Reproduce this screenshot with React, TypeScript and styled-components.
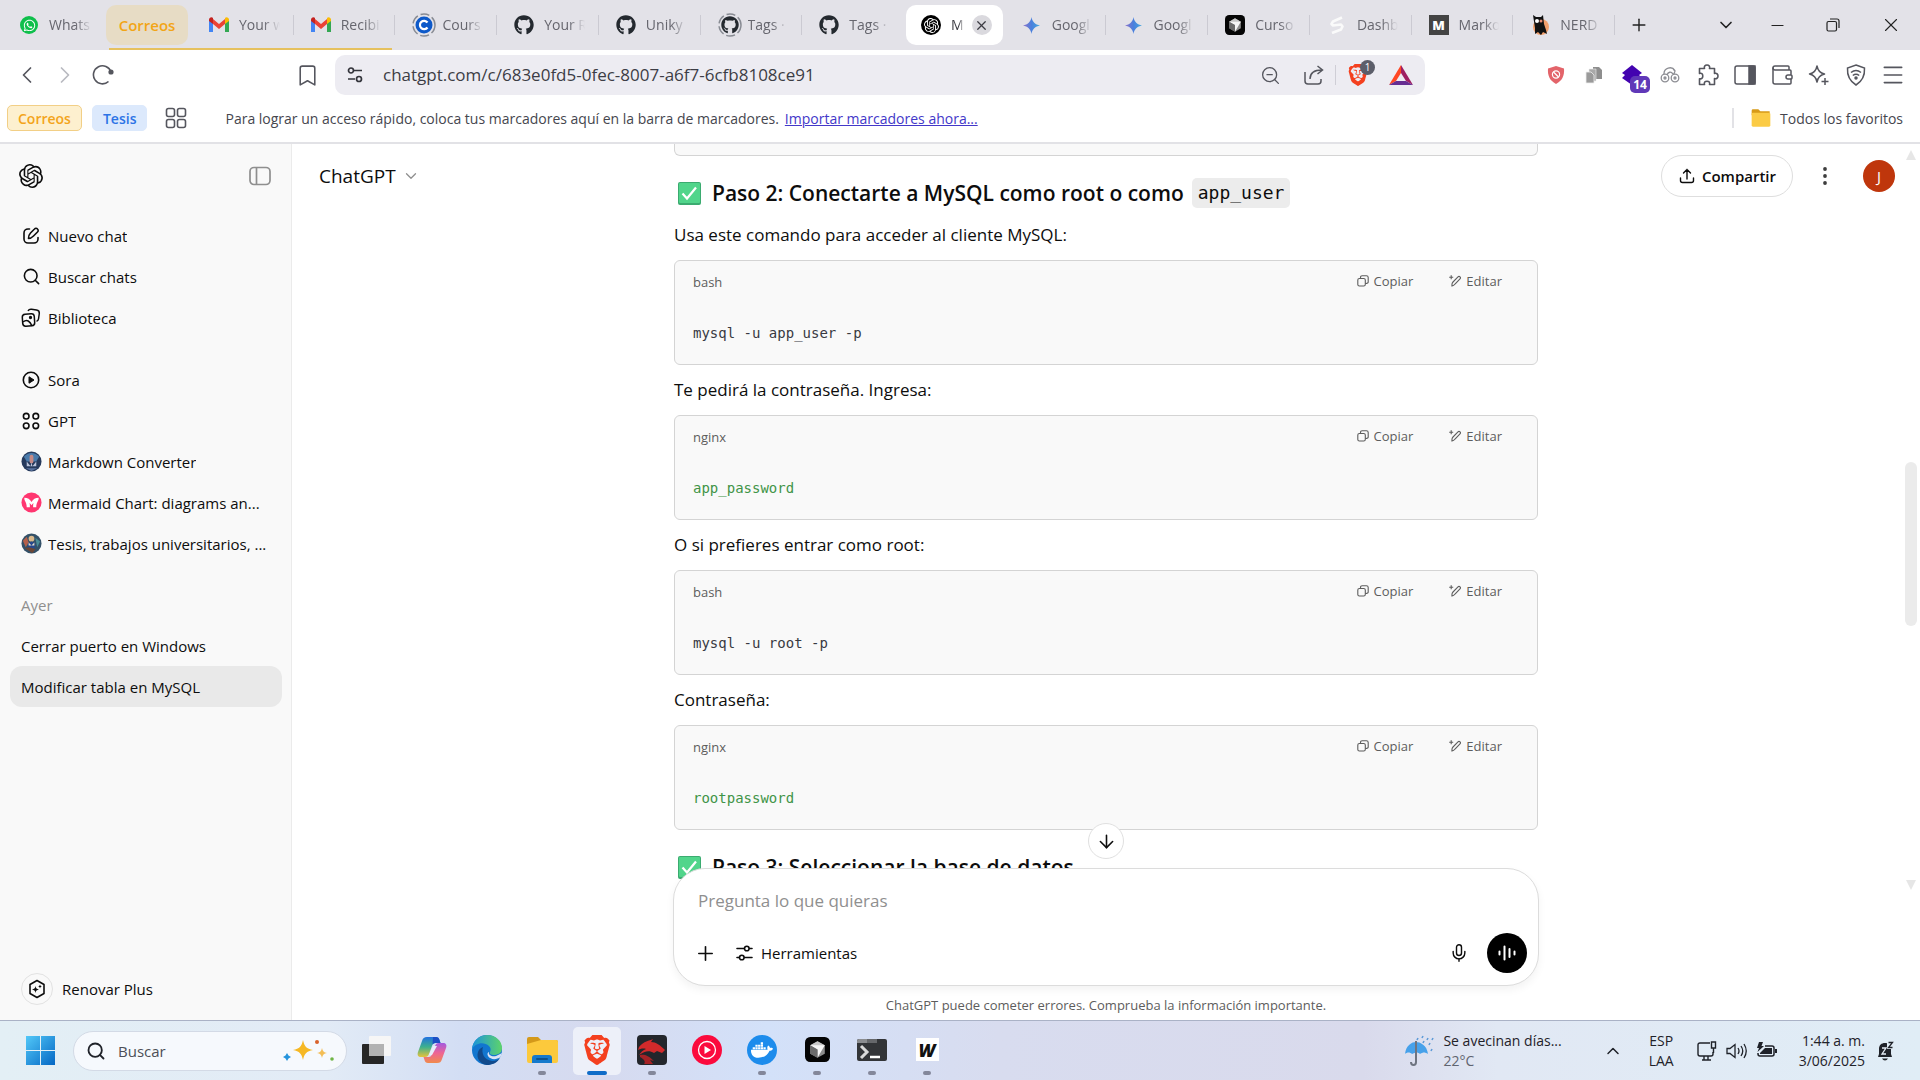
import React from "react";
import styled, { createGlobalStyle, css } from "styled-components";
import {
  ArrowDown,
  Bookmark,
  ChevronDown,
  ChevronLeft,
  ChevronRight,
  ChevronUp,
  Menu,
  Mic,
  Minus,
  Plus,
  Search,
  Wallet,
  X,
  ZoomOut,
} from "lucide-react";
import { FaGithub, FaWhatsapp, FaDocker } from "react-icons/fa";
import { SiOpenai, SiBrave } from "react-icons/si";

const ui = `"Open Sans", "Noto Sans", sans-serif`;
const mono = `"DejaVu Sans Mono", "Liberation Mono", monospace`;

const GlobalStyle = createGlobalStyle`
  *, *::before, *::after { box-sizing: border-box; }
  body { margin: 0; background: #fff; font-family: ${ui}; color: #0d0d0d; }
  button, input, textarea { font: inherit; color: inherit; border: 0; background: none; padding: 0; margin: 0; outline: 0; }
  button { cursor: pointer; }
  svg { display: block; flex: none; }
  h2, p, pre, ul { margin: 0; padding: 0; }
  ul { list-style: none; }
`;

const Screen = styled.div`
  display: flex;
  flex-direction: column;
  height: 100vh;
  overflow: hidden;
`;

/* ---------- tab strip ---------- */

const TabStrip = styled.div`
  display: flex;
  flex: none;
  height: 50px;
  background: #e3e2e8;
  color: #66666e;
  font-size: 14px;
`;

const tabBase = css`
  display: flex;
  align-items: center;
  min-width: 0;
  height: 50px;
  text-align: left;
`;

const PinnedTab = styled.button`
  ${tabBase}
  flex: none;
  width: 106px;
  gap: 10px;
  padding: 0 14px 0 19px;
`;

const Tab = styled.button<{ $divider?: boolean }>`
  ${tabBase}
  flex: 1 1 0;
  gap: 10px;
  padding: 0 14px 0 17px;
  background: ${(p) =>
    p.$divider ? "linear-gradient(#cbcad2, #cbcad2) right center / 1px 20px no-repeat" : "none"};
`;

const ActiveTab = styled.div`
  display: flex;
  flex: 1 1 0;
  align-items: center;
  justify-content: space-between;
  min-width: 0;
  height: 40px;
  margin: 5px 2px;
  padding: 0 11px 0 15px;
  border-radius: 10px;
  background: #fff;
  color: #3b3b42;
`;

const ActiveTitle = styled.button`
  display: flex;
  align-items: center;
  gap: 10px;
  min-width: 0;
  overflow: hidden;
`;

const TabText = styled.span`
  flex: 1;
  min-width: 0;
  overflow: hidden;
  white-space: nowrap;
  line-height: 20px;
  mask-image: linear-gradient(90deg, #000 60%, transparent 100%);
`;

const TabClose = styled.button`
  display: grid;
  place-items: center;
  flex: none;
  width: 20px;
  height: 20px;
  border-radius: 50%;
  background: #dad9de;
`;

const Favicon = styled.span`
  display: grid;
  place-items: center;
  flex: none;
  width: 20px;
  height: 24px;
  color: #24292f;
`;

const WhatsAppDisc = styled.span`
  display: grid;
  place-items: center;
  width: 18px;
  height: 18px;
  border-radius: 50%;
  background: #0fbf4b;
  color: #fff;
`;

const TabGroup = styled.div`
  position: relative;
  display: flex;
  flex: 2 1 148px;
  min-width: 0;
  &::after {
    content: "";
    position: absolute;
    left: 3px;
    right: 3px;
    bottom: 0;
    height: 2px;
    background: #e6c15e;
  }
`;

const GroupChip = styled.button`
  flex: none;
  width: 82px;
  height: 40px;
  margin: 5px 4px 5px 0;
  border-radius: 10px;
  background: #e7dcc5;
  color: #f2a516;
  font-size: 15px;
  font-weight: 600;
`;

const WindowControls = styled.div`
  display: flex;
  align-items: center;
  flex: none;
  color: #222;
`;

const WindowButton = styled.button<{ $w: number; $apart?: boolean }>`
  display: grid;
  place-items: center;
  width: ${(p) => p.$w}px;
  height: 50px;
  margin-left: ${(p) => (p.$apart ? "39px" : 0)};
`;

/* ---------- toolbar ---------- */

const Toolbar = styled.div`
  display: flex;
  align-items: center;
  flex: none;
  height: 50px;
  padding: 0 9px 0 8px;
  color: #55565e;
`;

const ToolButton = styled.button<{ $dim?: boolean }>`
  position: relative;
  display: grid;
  place-items: center;
  flex: none;
  width: 38px;
  height: 38px;
  color: ${(p) => (p.$dim ? "#b9bac0" : "inherit")};
`;

const AddressBar = styled.div`
  display: flex;
  align-items: center;
  flex: 0 1 1090px;
  min-width: 0;
  height: 40px;
  margin-left: 9px;
  padding: 0 3px 0 11px;
  border-radius: 10px;
  background: #edecf2;
  ${ToolButton} {
    width: 43px;
  }
`;

const Address = styled.input`
  flex: 1;
  min-width: 0;
  margin-left: 19px;
  font-size: 17px;
  line-height: 24px;
  color: #3c3d45;
`;

const NavGap = styled.span`
  width: 166px;
  flex: none;
`;

const BarDivider = styled.span<{ $h: number }>`
  flex: none;
  width: 1px;
  height: ${(p) => p.$h}px;
  background: #cfced6;
`;

const PinnedExtensions = styled.div`
  display: flex;
  margin-left: auto;
`;

const BrowserTools = styled.div`
  display: flex;
  ${ToolButton} {
    width: 37px;
  }
`;

const CountBadge = styled.span<{ $round?: boolean }>`
  position: absolute;
  right: ${(p) => (p.$round ? "4px" : "1px")};
  top: ${(p) => (p.$round ? "4px" : "20px")};
  min-width: ${(p) => (p.$round ? 15 : 20)}px;
  padding: 0 2px;
  border-radius: ${(p) => (p.$round ? 8 : 5)}px;
  background: ${(p) => (p.$round ? "#5c5e6a" : "#6038b8")};
  color: #fff;
  font-size: ${(p) => (p.$round ? 10 : 12)}px;
  font-weight: ${(p) => (p.$round ? 400 : 700)};
  line-height: ${(p) => (p.$round ? 15 : 17)}px;
  text-align: center;
`;

const BookmarksBar = styled.div`
  display: flex;
  align-items: center;
  flex: none;
  height: 44px;
  padding: 0 17px 6px 7px;
  border-bottom: 2px solid #e2e2e6;
  color: #45464e;
  font-size: 14px;
  white-space: nowrap;
`;

const SavedGroup = styled.button<{ $tone: "amber" | "blue" }>`
  height: 26px;
  margin-right: 10px;
  padding: 0 10px;
  border-radius: 5px;
  font-size: 14px;
  font-weight: 600;
  ${(p) =>
    p.$tone === "amber"
      ? "background:#fdf0cf;border:1px solid #f2cf86;color:#f3a41b;"
      : "background:#dce9fc;border:1px solid #dce9fc;color:#2d74e6;"}
`;

const BarHint = styled.p`
  margin-left: 38px;
`;

const BarLink = styled.a`
  margin-left: 6px;
  color: #4338c9;
`;

const GridButton = styled.button`
  margin-left: 8px;
`;

const AllBookmarks = styled.button`
  display: flex;
  align-items: center;
  gap: 9px;
  height: 20px;
  margin-left: auto;
  padding-left: 17px;
  border-left: 2px solid #e2e2e6;
`;

/* ---------- page ---------- */

const Page = styled.div`
  display: flex;
  flex: 1;
  min-height: 0;
`;

const Sidebar = styled.nav`
  display: flex;
  flex-direction: column;
  flex: none;
  width: 292px;
  padding: 0 9px 15px 10px;
  border-right: 1px solid #ebebeb;
  background: #f9f9f9;
`;

const SideHeader = styled.div`
  display: flex;
  align-items: center;
  justify-content: space-between;
  height: 63px;
  margin-bottom: 8px;
  padding: 0 11px 0 9px;
`;

const SideSection = styled.ul`
  margin-bottom: 21px;
`;

const SideLink = styled.a<{ $active?: boolean }>`
  display: flex;
  align-items: center;
  gap: 7px;
  height: 41px;
  padding: 0 11px;
  border-radius: 12px;
  background: ${(p) => (p.$active ? "#e9e9e9" : "none")};
  color: #0d0d0d;
  font-size: 15px;
  text-decoration: none;
`;

const SideHeading = styled.h2`
  padding: 0 11px;
  color: #8f8f8f;
  font-size: 15px;
  font-weight: 400;
  line-height: 40px;
`;

const SideIcon = styled.span`
  display: grid;
  place-items: center;
  flex: none;
  width: 20px;
`;

const Ellipsis = styled.span`
  min-width: 0;
  overflow: hidden;
  text-overflow: ellipsis;
  white-space: nowrap;
`;

const Upgrade = styled.button`
  display: flex;
  align-items: center;
  gap: 9px;
  margin-top: auto;
  padding-left: 11px;
  font-size: 15px;
`;

const UpgradeIcon = styled.span`
  display: grid;
  place-items: center;
  width: 32px;
  height: 32px;
  border: 1px solid #e2e2e2;
  border-radius: 50%;
`;

const Main = styled.main`
  position: relative;
  display: flex;
  flex-direction: column;
  flex: 1;
  min-width: 0;
`;

const ChatHeader = styled.header`
  position: absolute;
  z-index: 2;
  top: 0;
  left: 0;
  right: 0;
  display: flex;
  align-items: center;
  justify-content: space-between;
  height: 63px;
  padding: 0 25px 0 27px;
`;

const ModelButton = styled.button`
  display: flex;
  align-items: center;
  gap: 6px;
  font-size: 19px;
  line-height: 28px;
`;

const HeaderActions = styled.div`
  display: flex;
  align-items: center;
`;

const ShareButton = styled.button`
  display: flex;
  align-items: center;
  gap: 7px;
  height: 42px;
  padding: 0 16px 0 17px;
  border: 1px solid #dedede;
  border-radius: 21px;
  background: #fff;
  font-size: 15px;
  font-weight: 600;
`;

const MoreButton = styled.button`
  display: grid;
  place-items: center;
  width: 40px;
  height: 40px;
  margin: 0 18px 0 12px;
`;

const Avatar = styled.button`
  width: 32px;
  height: 32px;
  border-radius: 50%;
  background: #bf360c;
  color: #fff;
  font-size: 15px;
`;

const Thread = styled.div`
  display: flex;
  justify-content: center;
  flex: 1;
  min-height: 0;
  overflow: hidden;
`;

const Message = styled.article`
  width: 864px;
  max-width: 100%;
`;

const StepTitle = styled.h2`
  display: flex;
  align-items: center;
  height: 28px;
  margin: 23px 0 14px;
  padding-left: 4px;
  font-size: 21px;
  font-weight: 600;
  white-space: pre;
`;

const StepText = styled.span`
  margin: 0 8px 0 11px;
`;

const InlineCode = styled.code`
  padding: 0 6px;
  border-radius: 5px;
  background: #ececec;
  font-family: ${mono};
  font-size: 18px;
  font-weight: 400;
  line-height: 30px;
`;

const Paragraph = styled.p`
  font-size: 17px;
  line-height: 28px;
`;

const CodeBox = styled.section`
  height: 105px;
  margin: 11px 0;
  padding: 8px 18px;
  border: 1px solid #d4d4d4;
  border-radius: 6px;
  background: #f9f9f9;
`;

const CodeBoxEnd = styled.div`
  height: 12px;
  border: 1px solid #d4d4d4;
  border-top: 0;
  border-radius: 0 0 6px 6px;
  background: #f9f9f9;
`;

const CodeHead = styled.div`
  display: flex;
  align-items: center;
  height: 26px;
  padding-right: 17px;
  color: #5d5d5d;
  font-size: 13px;
`;

const CodeActions = styled.div`
  display: flex;
  align-items: center;
  gap: 36px;
  height: 24px;
  margin-bottom: auto;
  margin-left: auto;
`;

const CodeAction = styled.button`
  display: flex;
  align-items: center;
  gap: 5px;
`;

const CodeText = styled.pre<{ $green?: boolean }>`
  margin-top: 28px;
  color: ${(p) => (p.$green ? "#3f9447" : "#383a42")};
  font-family: ${mono};
  font-size: 14px;
  line-height: 20px;
  code {
    font: inherit;
  }
`;

const ComposerArea = styled.div`
  position: relative;
  z-index: 1;
  display: flex;
  flex-direction: column;
  align-items: center;
  flex: none;
  margin-top: -22px;
`;

const Composer = styled.form`
  width: 866px;
  max-width: 100%;
  height: 118px;
  padding: 18px 11px 10px 24px;
  border: 1px solid #dcdcdc;
  border-radius: 32px;
  background: #fff;
  box-shadow: 0 4px 8px rgba(0, 0, 0, 0.05);
`;

const Prompt = styled.textarea`
  display: block;
  width: 100%;
  height: 28px;
  resize: none;
  overflow: hidden;
  font-size: 17px;
  line-height: 28px;
  &::placeholder {
    color: #8f8f8f;
    opacity: 1;
  }
`;

const ComposerRow = styled.div`
  display: flex;
  align-items: center;
  height: 40px;
  margin: 18px 0 0 -4px;
  font-size: 15px;
`;

const ToolsButton = styled.button`
  display: flex;
  align-items: center;
  gap: 8px;
  margin-left: 19px;
`;

const MicButton = styled.button`
  margin-left: auto;
  margin-right: 18px;
`;

const VoiceButton = styled.button`
  display: grid;
  place-items: center;
  width: 40px;
  height: 40px;
  border-radius: 50%;
  background: #000;
`;

const Disclaimer = styled.p`
  padding: 9px 0 5px;
  color: #5d5d5d;
  font-size: 13px;
  line-height: 20px;
`;

const JumpDown = styled.button`
  position: absolute;
  top: -45px;
  display: grid;
  place-items: center;
  width: 36px;
  height: 36px;
  border: 1px solid #e0e0e0;
  border-radius: 50%;
  background: #fff;
`;

const Scrollbar = styled.div`
  position: absolute;
  z-index: 3;
  top: 0;
  right: 2px;
  bottom: 128px;
  display: flex;
  flex-direction: column;
  align-items: center;
  justify-content: space-between;
  width: 14px;
  padding: 6px 0 2px;
`;

const ScrollThumb = styled.span`
  width: 12px;
  height: 164px;
  margin-top: 48px;
  border-radius: 6px;
  background: #ebebeb;
`;

/* ---------- taskbar ---------- */

const Taskbar = styled.footer`
  display: flex;
  align-items: center;
  flex: none;
  height: 60px;
  padding: 0 26px;
  border-top: 1px solid #aab2c6;
  background: linear-gradient(
    90deg,
    #e3eff5 0%,
    #e2ebf6 17%,
    #d3def4 24%,
    #d6daef 31%,
    #d3e1f9 40%,
    #d8dcef 52%,
    #d9daec 71%,
    #e1e8f4 78%,
    #e0edf6 100%
  );
  color: #1f2229;
  font-size: 14px;
`;

const SearchBox = styled.label`
  display: flex;
  align-items: center;
  width: 274px;
  height: 40px;
  margin: 0 6px 0 18px;
  padding: 0 11px 0 12px;
  border: 1px solid #d3dae6;
  border-radius: 20px;
  background: #f6f9fd;
`;

const SearchInput = styled.input`
  flex: 1;
  min-width: 0;
  margin-left: 12px;
  font-size: 15px;
  &::placeholder {
    color: #4c4f57;
    opacity: 1;
  }
`;

const Apps = styled.div`
  display: flex;
  gap: 7px;
`;

const AppButton = styled.button<{ $active?: boolean; $open?: boolean }>`
  display: grid;
  grid-template-rows: 1fr 4px;
  place-items: center;
  width: 48px;
  height: 48px;
  padding-top: 2px;
  border-radius: 5px;
  background: ${(p) => (p.$active ? "#edf0f9" : "none")};
  &::after {
    content: "";
    width: ${(p) => (p.$active ? 20 : 8)}px;
    height: 4px;
    border-radius: 2px;
    background: ${(p) => (p.$active ? "#0f6cc8" : p.$open ? "#83879a" : "none")};
  }
`;

const Tray = styled.div`
  display: flex;
  align-items: center;
  margin-left: auto;
`;

const Weather = styled.button`
  display: flex;
  align-items: center;
  gap: 9px;
  margin-right: 41px;
  text-align: left;
  line-height: 20px;
`;

const Faint = styled.span`
  display: block;
  color: #5f6470;
`;

const Language = styled.button`
  margin: 0 23px 0 26px;
  line-height: 20px;
  text-align: center;
`;

const TrayIcons = styled.button`
  display: flex;
  gap: 9px;
  margin-right: 22px;
`;

const Clock = styled.button`
  margin-right: 12px;
  line-height: 20px;
  text-align: right;
`;

/* ---------- drawings ---------- */

const Gmail = () => (
  <svg width="20" height="16" viewBox="0 0 20 16">
    <path d="M0 2v13h4V6z" fill="#4285f4" />
    <path d="M20 2v13h-4V6z" fill="#34a853" />
    <path d="M4 2l6 5 6-5v5l-6 5-6-5z" fill="#ea4335" />
    <path d="M0 3c0-3 3-3.400 4-2v6L0 4z" fill="#c5221f" />
    <path d="M20 3c0-3-3-3.400-4-2v6l4-3z" fill="#fbbc04" />
  </svg>
);

const Coursera = () => (
  <svg width="24" height="24" viewBox="0 0 24 24">
    <circle cx="12" cy="12" r="11" fill="none" stroke="#888b93" strokeWidth="1.500" strokeDasharray="9 3" />
    <circle cx="12" cy="12" r="8.500" fill="#0d59c9" />
    <path d="M15.500 9.500a4.200 4.200 0 1 0 0 5" fill="none" stroke="#fff" strokeWidth="2.200" />
  </svg>
);

const RingedGithub = () => (
  <svg width="24" height="24" viewBox="0 0 24 24">
    <circle cx="12" cy="12" r="11" fill="none" stroke="#888b93" strokeWidth="1.500" strokeDasharray="9 3" />
    <g transform="translate(3 3)">
      <FaGithub size={18} color="#24292f" />
    </g>
  </svg>
);

const Gemini = () => (
  <svg width="17" height="17" viewBox="0 0 18 18">
    <defs>
      <linearGradient id="gem" x1="0" x2="1">
        <stop offset="0" stopColor="#8e72c9" />
        <stop offset="0.500" stopColor="#4a80dd" />
        <stop offset="1" stopColor="#43a8de" />
      </linearGradient>
    </defs>
    <path d="M9 0c.8 5 4 8.200 9 9-5 .8-8.200 4-9 9-.8-5-4-8.200-9-9 5-.8 8.200-4 9-9z" fill="url(#gem)" />
  </svg>
);

const CursorLogo = ({ size }: { size: number }) => (
  <svg width={size} height={size} viewBox="0 0 24 24">
    <rect width="24" height="24" rx="5" fill="#050505" />
    <path d="M12 4l7 4v8l-7 4-7-4V8z" fill="#8d8d8d" />
    <path d="M5 8l7-4 7 4-7 4z" fill="#c9c9c9" />
    <path d="M5 8h14l-7 12v-8z" fill="#f7f7f7" />
    <path d="M5 8l7 4v8l-7-4z" fill="#6b6b6b" />
  </svg>
);

const SLogo = () => (
  <svg width="16" height="18" viewBox="0 0 16 18" fill="none" stroke="#fafafa" strokeWidth="2.600" strokeLinejoin="round">
    <path d="M13 1.500L4 5.500 2.500 8 4 9.500l8-1 1.500 2-1.500 3L3 17" />
  </svg>
);

const LetterTile = styled.span<{ $dark?: boolean; $size: number }>`
  display: grid;
  place-items: center;
  width: ${(p) => p.$size}px;
  height: ${(p) => p.$size}px;
  background: ${(p) => (p.$dark ? "#444" : "#fff")};
  color: ${(p) => (p.$dark ? "#fff" : "#111")};
  font-size: ${(p) => (p.$dark ? 13 : 18)}px;
  font-style: ${(p) => (p.$dark ? "normal" : "italic")};
  font-weight: 800;
  line-height: 1;
`;

const CatLogo = () => (
  <svg width="20" height="20" viewBox="0 0 20 20">
    <circle cx="11" cy="12" r="8" fill="#f3a06c" />
    <path d="M3 0l3 2h5l2-2 1 9 2 6 1 4-4-2-2 3-3-3-3 2 0-6z" fill="#111" />
    <circle cx="7" cy="6" r="2" fill="#fff" />
    <circle cx="11" cy="6" r="1.500" fill="#e58a72" />
  </svg>
);

const OpenAIDisc = styled.span`
  display: grid;
  place-items: center;
  flex: none;
  width: 20px;
  height: 20px;
  border-radius: 50%;
  background: #000;
  color: #fff;
`;

const Restore = () => (
  <svg width="14" height="14" viewBox="0 0 14 14" fill="none" stroke="#222" strokeWidth="1.200">
    <rect x="1" y="3.500" width="9.500" height="9.500" rx="1.500" />
    <path d="M4 1h7a2 2 0 0 1 2 2v7" />
  </svg>
);

const Reload = () => (
  <svg width="22" height="22" viewBox="0 0 22 22" fill="none" stroke="#55565e" strokeWidth="1.600">
    <path d="M16.500 17.500A9 9 0 1 1 19 8" />
    <circle cx="19" cy="8" r="1.800" fill="#55565e" />
  </svg>
);

const SiteControls = () => (
  <svg width="18" height="18" viewBox="0 0 18 18" fill="none" stroke="#33343b" strokeWidth="1.700">
    <circle cx="5" cy="4.500" r="2.500" />
    <path d="M8 4.500h8M2 13h7" />
    <circle cx="13" cy="13" r="2.500" />
  </svg>
);

const ShareArrow = () => (
  <svg width="22" height="22" viewBox="0 0 22 22" fill="none" stroke="#55565e" strokeWidth="1.500">
    <path d="M2 8v9a3 3 0 0 0 3 3h10a3 3 0 0 0 3-3v-2" />
    <path d="M7 15c0-6 4-9 12-9M14.500 2l5 4-5 4" />
  </svg>
);

const BatTriangle = () => (
  <svg width="24" height="20" viewBox="0 0 24 20">
    <path d="M12 0L0 20l7-4 5-8z" fill="#ff4724" />
    <path d="M12 0l12 20-7-4-5-8z" fill="#9e1f63" />
    <path d="M0 20h24l-7-4H7z" fill="#662d91" />
  </svg>
);

const BlockShield = () => (
  <svg width="18" height="18" viewBox="0 0 18 18">
    <path d="M9 0l8 2.500c.5 7-1.500 12-8 15.500C2.500 14.500.5 9.500 1 2.500z" fill="#e3646a" />
    <circle cx="9" cy="8.500" r="3.600" fill="none" stroke="#fff" strokeWidth="1.200" />
    <path d="M6.500 6l5 5" stroke="#fff" strokeWidth="1.200" />
  </svg>
);

const CopyStack = () => (
  <svg width="18" height="18" viewBox="0 0 18 18">
    <path d="M8 1h6l3 3v9H8z" fill="#8e8e8e" />
    <path d="M4 3h7v12H4z" fill="#a9a9a9" stroke="#eee" strokeWidth=".6" />
    <path d="M1 6h5l3 3v8H1z" fill="#9a9a9a" stroke="#eee" strokeWidth=".8" />
  </svg>
);

const PurpleGem = () => (
  <svg width="22" height="20" viewBox="0 0 22 20">
    <path d="M11 0l10 8-3 2 3 3-10 7L1 13l3-3-3-2z" fill="#4303b0" />
  </svg>
);

const CirclesIcon = () => (
  <svg width="20" height="18" viewBox="0 0 20 18" fill="none" stroke="#8c8d93" strokeWidth="1.300">
    <circle cx="5" cy="12" r="3.800" />
    <circle cx="15" cy="12" r="3.800" />
    <circle cx="5" cy="12" r="1" />
    <circle cx="15" cy="12" r="1" />
    <path d="M4 8a6 6 0 0 1 11-3.500M7 9c1-3 4-4 6-1M13 3l2 2-1 3" />
  </svg>
);

const PuzzleIcon = () => (
  <svg width="22" height="22" viewBox="0 0 22 22" fill="none" stroke="#55565e" strokeWidth="1.600" strokeLinejoin="round">
    <path d="M2.500 4.500h5C6.800 2.500 8 1 10 1s3.200 1.500 2.500 3.500h5v5c2-.7 3.500.5 3.500 2.500s-1.500 3.200-3.500 2.500v6h-5c.7-2-.5-3.300-2.500-3.300s-3.200 1.300-2.500 3.300h-5v-5.800c2 .7 3.300-.7 3.300-2.700s-1.300-3.200-3.300-2.500z" />
  </svg>
);

const SidePanelIcon = () => (
  <svg width="22" height="20" viewBox="0 0 22 20" fill="none" stroke="#55565e" strokeWidth="1.500">
    <rect x="1" y="1" width="20" height="18" rx="2" />
    <path d="M15 1h6v18h-6z" fill="#55565e" />
  </svg>
);

const LeoSparkle = () => (
  <svg width="22" height="22" viewBox="0 0 22 22" fill="none" stroke="#55565e" strokeWidth="1.500" strokeLinejoin="round">
    <path d="M9 2c.8 4.500 3 7 7.500 8-4.500 1-6.700 3.500-7.500 8-.8-4.500-3-7-7.500-8C6 9 8.200 6.500 9 2z" />
    <path d="M17 14v7M13.500 17.500h7" />
  </svg>
);

const VpnShield = () => (
  <svg width="22" height="22" viewBox="0 0 22 22" fill="none" stroke="#55565e" strokeWidth="1.500">
    <path d="M11 1l8.500 3c.5 8-2 13-8.500 17C4.500 17 2 12 2.500 4z" />
    <path d="M6 8.500c3-2.500 7-2.500 10 0M7.800 11.500c2-1.600 4.400-1.600 6.400 0" />
    <circle cx="11" cy="14" r="1" fill="#55565e" />
  </svg>
);

const FourSquares = () => (
  <svg width="22" height="22" viewBox="0 0 22 22" fill="none" stroke="#55565e" strokeWidth="1.600">
    {[1.5, 12.5].map((x) =>
      [1.5, 12.5].map((y) => <rect key={`${x}${y}`} x={x} y={y} width="8" height="8" rx="2" />)
    )}
  </svg>
);

const Folder = ({ size }: { size: number }) => (
  <svg width={size} height={size} viewBox="0 0 30 30">
    <path d="M1 4q0-2 2-2h8l3 3h14v6H1z" fill="#d79a17" />
    <rect x="1" y="7" width="28" height="21" rx="2" fill="#fbcb45" />
  </svg>
);

const PanelToggle = () => (
  <svg width="22" height="20" viewBox="0 0 22 20" fill="none" stroke="#8f8f8f" strokeWidth="1.700">
    <rect x="1" y="1.500" width="20" height="17" rx="4" />
    <path d="M7.500 1.500v17" />
  </svg>
);

const Pencil = () => (
  <svg width="18" height="18" viewBox="0 0 18 18" fill="none" stroke="#0d0d0d" strokeWidth="1.600" strokeLinejoin="round">
    <path d="M7.500 2H6a4 4 0 0 0-4 4v6a4 4 0 0 0 4 4h6a4 4 0 0 0 4-4v-1.500" strokeLinecap="round" />
    <path d="M6.500 11.500c0-3 .5-4 2-5.500l4-4a2 2 0 0 1 3 0 2 2 0 0 1 0 3l-4 4c-1.500 1.500-2.500 2.500-5 2.500z" />
  </svg>
);

const Library = () => (
  <svg width="20" height="20" viewBox="0 0 20 20" fill="none" stroke="#0d0d0d" strokeWidth="1.500">
    <rect x="1.500" y="6" width="12" height="12" rx="3" transform="rotate(-4 7 12)" />
    <path d="M7 3c1-2 2-2 3.500-1.800l5 .8c2 .3 3 1.500 2.800 3.500l-.8 5.500c-.2 1.500-1 2-2 2.400" />
    <path d="M2 14c4-3 7-1 9 4" />
    <circle cx="9.500" cy="9.500" r=".9" fill="#0d0d0d" />
  </svg>
);

const PlayCircle = () => (
  <svg width="18" height="18" viewBox="0 0 18 18">
    <circle cx="9" cy="9" r="7.700" fill="none" stroke="#0d0d0d" strokeWidth="1.600" />
    <path d="M7 5.800v6.400L12 9z" fill="#0d0d0d" stroke="#0d0d0d" strokeLinejoin="round" />
  </svg>
);

const FourRings = () => (
  <svg width="18" height="18" viewBox="0 0 18 18" fill="none" stroke="#0d0d0d" strokeWidth="1.600">
    {[4.2, 13.8].map((x) =>
      [4.2, 13.8].map((y) => <circle key={`${x}${y}`} cx={x} cy={y} r="2.800" />)
    )}
  </svg>
);

const BlueAvatar = () => (
  <svg width="21" height="21" viewBox="0 0 22 22">
    <circle cx="11" cy="11" r="10.500" fill="#263a5c" />
    <path d="M3 6a10 10 0 0 1 16 0l-3 5H6z" fill="#4a7bab" />
    <rect x="9" y="4" width="4" height="9" rx="2" fill="#c48a86" />
    <path d="M6 11l4 5 1-4 1 4 4-5v5H6z" fill="#b9c2da" />
    <path d="M5 18h12l-6 3z" fill="#5b74a0" />
  </svg>
);

const MermaidAvatar = () => (
  <svg width="21" height="21" viewBox="0 0 22 22">
    <circle cx="11" cy="11" r="10.500" fill="#ff3670" />
    <path d="M3.500 6c3.500 0 6 1.500 7.500 4.500C12.500 7.500 15 6 18.500 6c.3 3.500-2.500 4.500-2.500 10h-3.300c0-2.500 0-3.500.6-4.500-1 .8-1.800 1.500-2.300 2.500-.5-1-1.300-1.700-2.300-2.500.6 1 .6 2 .6 4.500H6c0-5.500-2.800-6.500-2.500-10z" fill="#fff" />
  </svg>
);

const ThesisAvatar = () => (
  <svg width="21" height="21" viewBox="0 0 22 22">
    <circle cx="11" cy="11" r="10.500" fill="#345168" />
    <path d="M2 8l4-4 2 6-3 5z" fill="#b5604a" />
    <path d="M15 5l5 4-3 6z" fill="#4a8d96" />
    <circle cx="11" cy="6" r="3" fill="#d9b98c" />
    <path d="M7 11l4-2 4 2-1 5H8z" fill="#27498f" />
    <path d="M8 10l3 3 3-3v3H8z" fill="#e8ddc6" />
    <path d="M4 16l5-1 6 2-3 4z" fill="#6d4635" />
  </svg>
);

const PlusHexagon = () => (
  <svg width="18" height="20" viewBox="0 0 18 20">
    <path d="M9 1.500l7 4v9l-7 4-7-4v-9z" fill="none" stroke="#0d0d0d" strokeWidth="1.600" strokeLinejoin="round" />
    <path d="M7.500 7c.4 2.400 1.200 3.100 3.500 3.500-2.300.4-3.100 1.100-3.500 3.500-.4-2.400-1.200-3.100-3.500-3.500C6.300 10.100 7.100 9.400 7.500 7zM12 5.500c.3 1.300.7 1.700 2 2-1.300.3-1.700.7-2 2-.3-1.300-.7-1.700-2-2 1.300-.3 1.700-.7 2-2z" fill="#0d0d0d" />
  </svg>
);

const UploadIcon = () => (
  <svg width="16" height="16" viewBox="0 0 16 16" fill="none" stroke="#0d0d0d" strokeWidth="1.400" strokeLinecap="round">
    <path d="M1.500 10v2.500a2 2 0 0 0 2 2h9a2 2 0 0 0 2-2V10M8 11V1.500M4.500 5L8 1.500 11.500 5" />
  </svg>
);

const Dots = () => (
  <svg width="6" height="20" viewBox="0 0 6 20" fill="#3d3d3d">
    <circle cx="3" cy="3" r="1.900" />
    <circle cx="3" cy="10" r="1.900" />
    <circle cx="3" cy="17" r="1.900" />
  </svg>
);

const CheckMark = () => (
  <svg width="23" height="23" viewBox="0 0 23 23">
    <rect x="0" y="0" width="23" height="23" rx="2" fill="#3bab70" />
    <rect x="1" y="1" width="21" height="20" rx="1" fill="#51d58b" />
    <path d="M4.500 11.500l4.500 5 9-11" fill="none" stroke="#fff" strokeWidth="2.200" />
  </svg>
);

const CopyIcon = () => (
  <svg width="12" height="12" viewBox="0 0 12 12" fill="none" stroke="#5d5d5d" strokeWidth="1.100">
    <rect x=".8" y="3.500" width="7.500" height="7.500" rx="1.600" />
    <path d="M3.500 3.500V2.400Q3.500.8 5.200.8h4.200q1.800 0 1.800 1.800V7q0 1.500-2.900 1.500" />
  </svg>
);

const EditIcon = () => (
  <svg width="12" height="12" viewBox="0 0 12 12" fill="none" stroke="#5d5d5d" strokeWidth="1.100">
    <path d="M3 11c-.3-2 0-3 1-4l5-5.200a1.400 1.400 0 0 1 2 2L6 9c-1 1.300-2 1.800-3 2z" />
    <path d="M2.200.2v4M.2 2.200h4" />
  </svg>
);

const SlidersIcon = () => (
  <svg width="17" height="18" viewBox="0 0 17 18" fill="none" stroke="#0d0d0d" strokeWidth="1.600" strokeLinecap="round">
    <path d="M1 4.500h7M13.500 4.500H16M1 13.500h2M8.500 13.500H16" />
    <circle cx="10.800" cy="4.500" r="2.300" />
    <circle cx="5.800" cy="13.500" r="2.300" />
  </svg>
);

const VoiceIcon = () => (
  <svg width="20" height="20" viewBox="0 0 20 20" stroke="#fff" strokeWidth="2" strokeLinecap="round">
    <path d="M2.500 8.500v3M7.500 3.500v13M12.500 6v8M17.500 8.500v3" />
  </svg>
);

const Triangle = ({ down }: { down?: boolean }) => (
  <svg width="12" height="10" viewBox="0 0 12 10">
    <path d={down ? "M1 0h10L6 10z" : "M6 0l5 10H1z"} fill="#e6e6e6" />
  </svg>
);

const WindowsLogo = () => (
  <svg width="29" height="29" viewBox="0 0 29 29">
    <defs>
      <linearGradient id="win" gradientUnits="userSpaceOnUse" x1="0" y1="0" x2="29" y2="29">
        <stop offset="0" stopColor="#52c8f8" />
        <stop offset="1" stopColor="#0467c4" />
      </linearGradient>
    </defs>
    <path d="M0 0h14v14H0zM15 0h14v14H15zM0 15h14v14H0zM15 15h14v14H15z" fill="url(#win)" />
  </svg>
);

const SearchSparkles = () => (
  <svg width="52" height="24" viewBox="0 0 52 24">
    <path d="M20 1c1.200 6 3.500 9 10 10-6.500 1.200-8.800 4-10 10-1.200-6-3.500-8.800-10-10 6.500-1 8.800-4 10-10z" fill="#f6b824" />
    <path d="M39 9c.6 3 1.800 4.500 5 5-3.200.6-4.400 2-5 5-.6-3-1.800-4.400-5-5 3.200-.5 4.400-2 5-5z" fill="#f3bd55" />
    <path d="M4 14l1.500 2.500L8 18l-2.500 1.500L4 22l-1.500-2.500L0 18l2.500-1.500z" fill="#2694dd" />
    <circle cx="34" cy="3" r="2" fill="#d9622b" />
    <circle cx="49" cy="20" r="1.800" fill="#6fb545" />
  </svg>
);

const TaskView = () => (
  <svg width="30" height="30" viewBox="0 0 30 30">
    <rect x="0" y="9" width="22" height="20" rx="1" fill="#262626" />
    <rect x="7" y="1" width="22" height="20" rx="1" fill="#f6f6f6" />
    <rect x="7" y="9" width="15" height="12" fill="#b2b2b2" />
  </svg>
);

const Copilot = () => (
  <svg width="30" height="30" viewBox="0 0 30 30">
    <defs>
      <linearGradient id="copA" x1="0" x2="0" y1="0" y2="1">
        <stop offset="0" stopColor="#2271e0" />
        <stop offset="0.500" stopColor="#3db18d" />
        <stop offset="1" stopColor="#e6c33c" />
      </linearGradient>
      <linearGradient id="copB" x1="0" x2="0" y1="0" y2="1">
        <stop offset="0" stopColor="#a25be0" />
        <stop offset="0.500" stopColor="#ee6594" />
        <stop offset="1" stopColor="#f08b4c" />
      </linearGradient>
    </defs>
    <path d="M10 2h9c2 0 3 1 3.500 3l1 3h-5c-2 0-3 1-3.500 3l-3 8c-.8 2-1.500 3-4 3H4c-3 0-4-2-3-5l4-11c1-3 2-4 5-4z" fill="url(#copA)" />
    <path d="M20 28h-9c-2 0-3-1-3.500-3l-1-3h5c2 0 3-1 3.500-3l3-8c.8-2 1.500-3 4-3h4c3 0 4 2 3 5l-4 11c-1 3-2 4-5 4z" fill="url(#copB)" />
    <path d="M16 2h3c2 0 3 1 3.500 3l1 3h-5c-2 0-2.500 1-3 2z" fill="#1c4fc4" />
    <path d="M16 11h4l-5 9h-3z" fill="#e8eefb" />
  </svg>
);

const Edge = () => (
  <svg width="30" height="30" viewBox="0 0 30 30">
    <defs>
      <linearGradient id="edgeTop" x1="0" x2="1">
        <stop offset="0" stopColor="#1b93dc" />
        <stop offset="1" stopColor="#5ed46a" />
      </linearGradient>
    </defs>
    <circle cx="15" cy="15" r="15" fill="#1276cf" />
    <path d="M0 14C1 5 8 0 15 0c9 0 15 6 15 13 0 5-4 7-8 7-3 0-5-1-4-3 1-2 1-4-1-6-5-5-14-3-17 3z" fill="url(#edgeTop)" />
    <path d="M11 12c-2 6 1 13 9 14 3 .3 6-.8 8-3-3 5-8 7-13 7C8 29 4 23 6 17c1-3 3-4 5-5z" fill="#114a8c" />
    <path d="M17 17c-1 3 3 5 7 4l6-3-1.500 4c-4 3-10 3-12.500-1-1-2-.5-3.500 1-4z" fill="#dbe3f5" />
  </svg>
);

const Explorer = () => (
  <svg width="31" height="30" viewBox="0 0 31 30">
    <path d="M0 4q0-2 2-2h9l3 3h15q2 0 2 2v4H0z" fill="#d4991a" />
    <path d="M0 9l14-4h15q2 0 2 2v19q0 2-2 2H2q-2 0-2-2z" fill="#fcc93c" />
    <path d="M5 28v-5q0-3 3-3h14q3 0 3 3v5z" fill="#1579cc" />
    <rect x="9" y="23" width="12" height="2" rx="1" fill="#0b528f" />
  </svg>
);

const DragonTile = () => (
  <svg width="30" height="30" viewBox="0 0 30 30">
    <rect width="30" height="30" rx="4" fill="#23262c" />
    <path d="M2 12c5-6 10-6 14-8l-2 3c5 0 9 3 14 8l-3 3-5-2-3 2c-5-3-9-2-15 2 2-3 4-5 7-6-3-1-6 0-8 1z" fill="#d22a2b" />
    <path d="M3 20c4-1 8 0 14 6l-4-1 3 4H7c2-2 0-5-4-7z" fill="#a52226" />
  </svg>
);

const MusicDisc = () => (
  <svg width="30" height="30" viewBox="0 0 30 30">
    <circle cx="15" cy="15" r="15" fill="#fb0a3d" />
    <circle cx="15" cy="15" r="8.500" fill="none" stroke="#fff" strokeWidth="1.300" />
    <path d="M12.500 11v8l6.500-4z" fill="#fff" />
  </svg>
);

const DockerDisc = () => (
  <svg width="30" height="30" viewBox="0 0 30 30">
    <circle cx="15" cy="15" r="15" fill="#1d8cec" />
    <g transform="translate(4 4)">
      <FaDocker size={22} color="#fff" />
    </g>
  </svg>
);

const TerminalTile = () => (
  <svg width="30" height="22" viewBox="0 0 30 22">
    <rect width="30" height="22" rx="2" fill="#333538" />
    <path d="M2 0h8v4H0V2q0-2 2-2z" fill="#8b8d90" />
    <path d="M10 0h10v4H10z" fill="#66686b" />
    <path d="M4 7l6 6-6 6" fill="none" stroke="#dadada" strokeWidth="3" />
    <path d="M13 18h10" stroke="#fff" strokeWidth="2.500" />
  </svg>
);

const Umbrella = () => (
  <svg width="30" height="32" viewBox="0 0 30 32">
    <path d="M1 19C2 10 8 7 12 7s11 3 12 12c-3-2-5-2-8 0-2-2-5-2-8 0-2-2-5-2-7 0z" fill="#47a1ea" />
    <path d="M12 6v21c0 4-5 4-5 0" fill="none" stroke="#6e7480" strokeWidth="2" />
    <path d="M14 3l-1 2M19 1l-1 2M24 3l-1 2M20 6l-1 2M26 8l-1 2M29 3l-1 2M28 14l-1 2" stroke="#5e9bd8" strokeWidth="1.600" />
  </svg>
);

const NetworkIcon = () => (
  <svg width="20" height="20" viewBox="0 0 20 20" fill="none" stroke="#1f2229" strokeWidth="1.400">
    <path d="M13 2H3Q1 2 1 4v9q0 2 2 2h11q2 0 2-2v-2M5 19h9M7 15v4M11 15v4" />
    <path d="M14.500 1h4v6h-4zM16.500 7v5" />
  </svg>
);

const SpeakerIcon = () => (
  <svg width="21" height="20" viewBox="0 0 21 20" fill="none" stroke="#1f2229" strokeWidth="1.300">
    <path d="M1 7.500h3L9 3.500v13l-5-4H1zM12 7q2 3 0 6M15 5q3.500 5 0 10M18 3q4.500 7 0 14" />
  </svg>
);

const BatteryIcon = () => (
  <svg width="21" height="20" viewBox="0 0 21 20">
    <path d="M9 5h7q2 0 2 2v6q0 2-2 2H4q-2 0-2-2v-1" fill="none" stroke="#1f2229" strokeWidth="1.500" />
    <path d="M9 7h7v6H4v-1z" fill="#1f2229" />
    <path d="M19 8h2v4h-2zM3 1h4L5.500 5H8L1.500 11 3 7H1z" fill="#1f2229" />
  </svg>
);

const SleepBell = () => (
  <svg width="17" height="20" viewBox="0 0 17 20">
    <path d="M1 16l1-3V8c0-4 2.500-6 6-6s6 2 6 6v5l1 3z" fill="#1f2229" />
    <path d="M5 17.500h6q-1 2-3 2t-3-2z" fill="#1f2229" />
    <path d="M5 7h4l-4 6h4" fill="none" stroke="#e7eef6" strokeWidth="1.300" />
    <path d="M10 0h7v8h-7z" fill="#e1ecf5" />
    <path d="M11.500 1.500h4l-4 5h4" fill="none" stroke="#1f2229" strokeWidth="1.300" />
  </svg>
);

/* ---------- data ---------- */

const tabsBefore = [
  { icon: <Coursera />, text: "Cours", divider: true },
  { icon: <FaGithub size={20} />, text: "Your R", divider: true },
  { icon: <FaGithub size={20} />, text: "Uniky", divider: true },
  { icon: <RingedGithub />, text: "Tags ·", divider: true },
  { icon: <FaGithub size={20} />, text: "Tags ·", divider: false },
];

const tabsAfter = [
  { icon: <Gemini />, text: "Googl", divider: true },
  { icon: <Gemini />, text: "Googl", divider: true },
  { icon: <CursorLogo size={20} />, text: "Curso", divider: true },
  { icon: <SLogo />, text: "Dashb", divider: true },
  { icon: <LetterTile $dark $size={20}>M</LetterTile>, text: "Marko", divider: true },
  { icon: <CatLogo />, text: "NERD", divider: true },
];

const steps = [
  { intro: "Usa este comando para acceder al cliente MySQL:", lang: "bash", code: "mysql -u app_user -p" },
  { intro: "Te pedirá la contraseña. Ingresa:", lang: "nginx", code: "app_password" },
  { intro: "O si prefieres entrar como root:", lang: "bash", code: "mysql -u root -p" },
  { intro: "Contraseña:", lang: "nginx", code: "rootpassword" },
];

const mainLinks = [
  { icon: <Pencil />, text: "Nuevo chat" },
  { icon: <Search size={19} strokeWidth={2} />, text: "Buscar chats" },
  { icon: <Library />, text: "Biblioteca" },
];

const gptLinks = [
  { icon: <PlayCircle />, text: "Sora" },
  { icon: <FourRings />, text: "GPT" },
  { icon: <BlueAvatar />, text: "Markdown Converter" },
  { icon: <MermaidAvatar />, text: "Mermaid Chart: diagrams an..." },
  { icon: <ThesisAvatar />, text: "Tesis, trabajos universitarios, ..." },
];

const apps = [
  { name: "Vista de tareas", icon: <TaskView /> },
  { name: "Copilot", icon: <Copilot /> },
  { name: "Edge", icon: <Edge /> },
  { name: "Explorador", icon: <Explorer />, open: true },
  { name: "Brave", icon: <SiBrave size={30} color="#f4401f" />, active: true },
  { name: "Dragon", icon: <DragonTile />, open: true },
  { name: "Music", icon: <MusicDisc /> },
  { name: "Docker", icon: <DockerDisc />, open: true },
  { name: "Cursor", icon: <CursorLogo size={25} />, open: true },
  { name: "Terminal", icon: <TerminalTile />, open: true },
  { name: "W", icon: <LetterTile $size={23}>W</LetterTile>, open: true },
];

function BrowserTab({ icon, text, divider }: { icon: React.ReactNode; text: string; divider?: boolean }) {
  return (
    <Tab $divider={divider}>
      <Favicon>{icon}</Favicon>
      <TabText>{text}</TabText>
    </Tab>
  );
}

function CodeBlock({ lang, code }: { lang: string; code: string }) {
  return (
    <CodeBox>
      <CodeHead>
        <span>{lang}</span>
        <CodeActions>
          <CodeAction>
            <CopyIcon />
            Copiar
          </CodeAction>
          <CodeAction>
            <EditIcon />
            Editar
          </CodeAction>
        </CodeActions>
      </CodeHead>
      <CodeText $green={lang === "nginx"}>
        <code>{code}</code>
      </CodeText>
    </CodeBox>
  );
}

function SideLinks({ links }: { links: { icon: React.ReactNode; text: string }[] }) {
  return (
    <SideSection>
      {links.map((l) => (
        <li key={l.text}>
          <SideLink href="#">
            <SideIcon>{l.icon}</SideIcon>
            <Ellipsis>{l.text}</Ellipsis>
          </SideLink>
        </li>
      ))}
    </SideSection>
  );
}

function BrowserChrome() {
  return (
    <>
      <TabStrip>
        <PinnedTab>
          <Favicon>
            <WhatsAppDisc>
              <FaWhatsapp size={13} />
            </WhatsAppDisc>
          </Favicon>
          <TabText>Whats</TabText>
        </PinnedTab>
        <TabGroup>
          <GroupChip>Correos</GroupChip>
          <BrowserTab icon={<Gmail />} text="Your w" divider />
          <BrowserTab icon={<Gmail />} text="Recibi" divider />
        </TabGroup>
        {tabsBefore.map((t, i) => (
          <BrowserTab key={i} {...t} />
        ))}
        <ActiveTab>
          <ActiveTitle>
            <OpenAIDisc>
              <SiOpenai size={15} />
            </OpenAIDisc>
            <TabText>M</TabText>
          </ActiveTitle>
          <TabClose aria-label="Cerrar pestaña">
            <X size={15} strokeWidth={2} />
          </TabClose>
        </ActiveTab>
        {tabsAfter.map((t, i) => (
          <BrowserTab key={i} {...t} />
        ))}
        <WindowControls>
          <WindowButton $w={48} aria-label="Nueva pestaña"><Plus size={20} strokeWidth={1.7} /></WindowButton>
          <WindowButton $w={48} $apart aria-label="Buscar pestañas"><ChevronDown size={20} strokeWidth={2} /></WindowButton>
          <WindowButton $w={54} aria-label="Minimizar"><Minus size={19} strokeWidth={1.4} /></WindowButton>
          <WindowButton $w={58} aria-label="Restaurar"><Restore /></WindowButton>
          <WindowButton $w={58} aria-label="Cerrar"><X size={22} strokeWidth={1.2} /></WindowButton>
        </WindowControls>
      </TabStrip>
      <Toolbar>
        <ToolButton aria-label="Atrás"><ChevronLeft size={28} strokeWidth={1.5} /></ToolButton>
        <ToolButton $dim aria-label="Adelante"><ChevronRight size={28} strokeWidth={1.5} /></ToolButton>
        <ToolButton aria-label="Recargar"><Reload /></ToolButton>
        <NavGap />
        <ToolButton aria-label="Guardar marcador"><Bookmark size={25} strokeWidth={1.5} /></ToolButton>
        <AddressBar>
          <SiteControls />
          <Address aria-label="Dirección" defaultValue="chatgpt.com/c/683e0fd5-0fec-8007-a6f7-6cfb8108ce91" />
          <ToolButton aria-label="Zoom"><ZoomOut size={21} strokeWidth={1.5} /></ToolButton>
          <ToolButton aria-label="Compartir página"><ShareArrow /></ToolButton>
          <BarDivider $h={20} />
          <ToolButton aria-label="Brave Shields">
            <SiBrave size={22} color="#f4401f" />
            <CountBadge $round>1</CountBadge>
          </ToolButton>
          <ToolButton aria-label="Brave Rewards"><BatTriangle /></ToolButton>
        </AddressBar>
        <PinnedExtensions>
          <ToolButton aria-label="Bloqueador"><BlockShield /></ToolButton>
          <ToolButton aria-label="Copias"><CopyStack /></ToolButton>
          <ToolButton aria-label="Extensión">
            <PurpleGem />
            <CountBadge>14</CountBadge>
          </ToolButton>
          <ToolButton aria-label="Círculos"><CirclesIcon /></ToolButton>
        </PinnedExtensions>
        <BrowserTools>
          <ToolButton aria-label="Extensiones"><PuzzleIcon /></ToolButton>
          <ToolButton aria-label="Panel lateral"><SidePanelIcon /></ToolButton>
          <ToolButton aria-label="Billetera"><Wallet size={24} strokeWidth={1.5} /></ToolButton>
          <ToolButton aria-label="Leo"><LeoSparkle /></ToolButton>
          <ToolButton aria-label="VPN"><VpnShield /></ToolButton>
          <ToolButton aria-label="Menú"><Menu size={26} strokeWidth={1.5} /></ToolButton>
        </BrowserTools>
      </Toolbar>
      <BookmarksBar>
        <SavedGroup $tone="amber">Correos</SavedGroup>
        <SavedGroup $tone="blue">Tesis</SavedGroup>
        <GridButton aria-label="Grupos de pestañas"><FourSquares /></GridButton>
        <BarHint>
          Para lograr un acceso rápido, coloca tus marcadores aquí en la barra de marcadores.
          <BarLink href="#">Importar marcadores ahora...</BarLink>
        </BarHint>
        <AllBookmarks>
          <Folder size={20} />
          Todos los favoritos
        </AllBookmarks>
      </BookmarksBar>
    </>
  );
}

export default function App() {
  return (
    <Screen>
      <GlobalStyle />
      <BrowserChrome />
      <Page>
        <Sidebar>
          <SideHeader>
            <SiOpenai size={24} />
            <button aria-label="Cerrar barra lateral">
              <PanelToggle />
            </button>
          </SideHeader>
          <SideLinks links={mainLinks} />
          <SideLinks links={gptLinks} />
          <SideHeading>Ayer</SideHeading>
          <SideLink href="#">Cerrar puerto en Windows</SideLink>
          <SideLink href="#" $active>Modificar tabla en MySQL</SideLink>
          <Upgrade>
            <UpgradeIcon><PlusHexagon /></UpgradeIcon>
            Renovar Plus
          </Upgrade>
        </Sidebar>
        <Main>
          <ChatHeader>
            <ModelButton>
              ChatGPT
              <ChevronDown size={18} strokeWidth={1.7} color="#8f8f8f" />
            </ModelButton>
            <HeaderActions>
              <ShareButton><UploadIcon />Compartir</ShareButton>
              <MoreButton aria-label="Más opciones"><Dots /></MoreButton>
              <Avatar>J</Avatar>
            </HeaderActions>
          </ChatHeader>
          <Thread>
            <Message>
              <CodeBoxEnd />
              <StepTitle>
                <CheckMark />
                <StepText>Paso 2: Conectarte a MySQL como root o como</StepText>
                <InlineCode>app_user</InlineCode>
              </StepTitle>
              {steps.map((s) => (
                <React.Fragment key={s.intro}>
                  <Paragraph>{s.intro}</Paragraph>
                  <CodeBlock lang={s.lang} code={s.code} />
                </React.Fragment>
              ))}
              <StepTitle>
                <CheckMark />
                <StepText>Paso 3: Seleccionar la base de datos</StepText>
              </StepTitle>
            </Message>
          </Thread>
          <ComposerArea>
            <JumpDown aria-label="Ir al final"><ArrowDown size={21} strokeWidth={1.8} /></JumpDown>
            <Composer>
              <Prompt aria-label="Mensaje" placeholder="Pregunta lo que quieras" />
              <ComposerRow>
                <button type="button" aria-label="Añadir"><Plus size={23} strokeWidth={1.7} /></button>
                <ToolsButton type="button"><SlidersIcon />Herramientas</ToolsButton>
                <MicButton type="button" aria-label="Dictar"><Mic size={20} strokeWidth={1.7} /></MicButton>
                <VoiceButton type="button" aria-label="Modo de voz"><VoiceIcon /></VoiceButton>
              </ComposerRow>
            </Composer>
            <Disclaimer>ChatGPT puede cometer errores. Comprueba la información importante.</Disclaimer>
          </ComposerArea>
          <Scrollbar>
            <Triangle />
            <ScrollThumb />
            <Triangle down />
          </Scrollbar>
        </Main>
      </Page>
      <Taskbar>
        <button aria-label="Inicio"><WindowsLogo /></button>
        <SearchBox>
          <Search size={20} strokeWidth={2.2} />
          <SearchInput aria-label="Buscar" placeholder="Buscar" />
          <SearchSparkles />
        </SearchBox>
        <Apps>
          {apps.map((a) => (
            <AppButton key={a.name} aria-label={a.name} $open={a.open} $active={a.active}>
              {a.icon}
            </AppButton>
          ))}
        </Apps>
        <Tray>
          <Weather>
            <Umbrella />
            <span>
              Se avecinan días...
              <Faint>22°C</Faint>
            </span>
          </Weather>
          <button aria-label="Iconos ocultos"><ChevronUp size={20} strokeWidth={1.8} /></button>
          <Language>
            ESP
            <br />
            LAA
          </Language>
          <TrayIcons aria-label="Red, volumen y batería">
            <NetworkIcon />
            <SpeakerIcon />
            <BatteryIcon />
          </TrayIcons>
          <Clock>
            1:44 a. m.
            <br />
            3/06/2025
          </Clock>
          <button aria-label="Notificaciones"><SleepBell /></button>
        </Tray>
      </Taskbar>
    </Screen>
  );
}
